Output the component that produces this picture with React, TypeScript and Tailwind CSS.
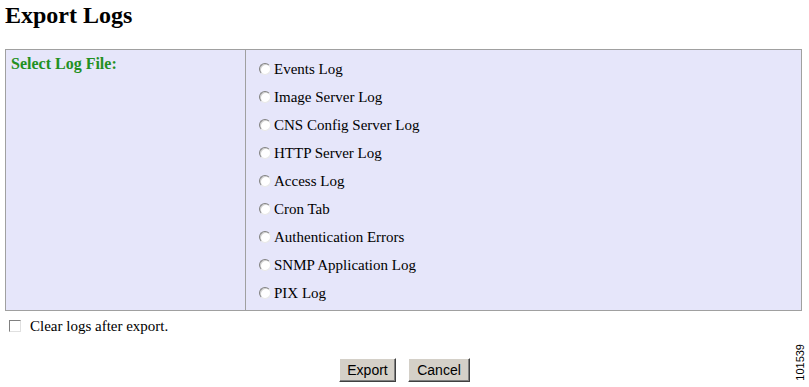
import React from "react";

const logs = [
  "Events Log",
  "Image Server Log",
  "CNS Config Server Log",
  "HTTP Server Log",
  "Access Log",
  "Cron Tab",
  "Authentication Errors",
  "SNMP Application Log",
  "PIX Log",
];

function Radio() {
  return (
    <span className="inline-block w-[12px] h-[12px] shrink-0 rounded-full bg-white border border-t-[#808080] border-l-[#808080] border-b-[#e8e8e8] border-r-[#e8e8e8] shadow-[inset_1px_1px_0_#d0d0d0]" />
  );
}

export default function App() {
  return (
    <div
      className="relative w-[809px] h-[387px] bg-white text-black overflow-hidden"
      style={{ fontFamily: '"Liberation Serif", "Times New Roman", serif' }}
    >
      <h1 className="pl-[5px] pt-[1px] text-[24px] leading-[28px] font-bold">Export Logs</h1>

      <div className="mt-[20px] ml-[5px] w-[797px] h-[262px] flex border border-[#a0a0a0] bg-[#e6e6fa]">
        <div className="w-[240px] border-r border-[#a0a0a0] pl-[5px] pt-[4px]">
          <div className="text-[16px] leading-[20px] font-bold text-[#229022]">Select Log File:</div>
        </div>
        <div className="flex-1 pl-[13px] pt-[5px]">
          {logs.map((l) => (
            <div key={l} className="h-[28px] flex items-center gap-[3px] text-[15px]">
              <Radio />
              <span className="leading-[28px]">{l}</span>
            </div>
          ))}
        </div>
      </div>

      <div className="mt-[1px] h-[28px] pl-[9px] flex items-center gap-[9px] text-[15px]">
        <span className="inline-block w-[12px] h-[12px] bg-white border border-t-[#808080] border-l-[#808080] border-b-[#e0e0e0] border-r-[#e0e0e0]" />
        <span className="leading-[28px]">Clear logs after export.</span>
      </div>

      <div
        className="mt-[18px] flex justify-center gap-[12px] text-[14px]"
        style={{ fontFamily: '"Liberation Sans", Arial, sans-serif' }}
      >
        <button className="w-[57px] h-[24px] bg-[#d4d0c8] border border-t-white border-l-white border-b-[#404040] border-r-[#404040] shadow-[inset_-1px_-1px_0_#808080] leading-none">
          Export
        </button>
        <button className="w-[62px] h-[24px] bg-[#d4d0c8] border border-t-white border-l-white border-b-[#404040] border-r-[#404040] shadow-[inset_-1px_-1px_0_#808080] leading-none">
          Cancel
        </button>
      </div>

      <div
        className="absolute left-[795px] top-[344px] text-[11px] leading-[11px] [writing-mode:vertical-rl] rotate-180"
        style={{ fontFamily: '"Liberation Sans", Arial, sans-serif' }}
      >
        101539
      </div>
    </div>
  );
}
